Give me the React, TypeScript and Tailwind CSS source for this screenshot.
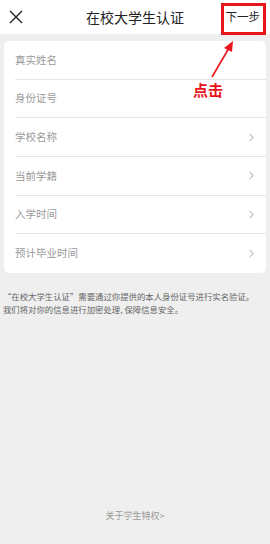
import { ChevronRight } from 'lucide-react';

const rows = [
  { label: '真实姓名', arrow: false },
  { label: '身份证号', arrow: false },
  { label: '学校名称', arrow: true },
  { label: '当前学籍', arrow: true },
  { label: '入学时间', arrow: true },
  { label: '预计毕业时间', arrow: true },
];

const font = { fontFamily: '"Noto Sans CJK SC", "Noto Sans", sans-serif' };

export default function App() {
  return (
    <div className="relative w-[270px] h-[544px] bg-[#efefef] flex flex-col overflow-hidden" style={font}>
      {/* header */}
      <div className="h-[34px] bg-white flex items-center px-[9px] relative shrink-0">
        <svg width="14" height="14" viewBox="0 0 14 14" className="text-[#222]">
          <path d="M1 1L13 13M13 1L1 13" stroke="currentColor" strokeWidth="1.4" fill="none" />
        </svg>
        <div className="absolute left-0 right-0 text-center text-[14px] text-[#222] leading-none pointer-events-none">
          在校大学生认证
        </div>
        <div className="ml-auto mr-px text-[11.5px] text-[#222] leading-none">下一步</div>
      </div>

      {/* form card */}
      <div className="mt-[7px] mx-[4px] bg-white rounded-[5px] pl-[11px]">
        {rows.map((r, i) => (
          <div
            key={r.label}
            className={`h-[38.67px] flex items-center pr-[8px] ${i < rows.length - 1 ? 'border-b border-[#e6e6e6]' : ''}`}
          >
            <span className="text-[10.5px] text-[#9a9a9a] leading-none">{r.label}</span>
            {r.arrow && <ChevronRight className="ml-auto text-[#707070]" size={13} strokeWidth={1.3} />}
          </div>
        ))}
      </div>

      <p className="mt-[17px] px-[3px] text-[8.4px] leading-[13px] text-[#666] whitespace-nowrap">
        “在校大学生认证”需要通过你提供的本人身份证号进行实名验证。
        <br />
        我们将对你的信息进行加密处理, 保障信息安全。
      </p>

      <div className="mt-auto mb-[22px] text-center text-[9px] text-[#999]">关于学生特权&gt;</div>

      {/* annotation overlay */}
      <div className="absolute left-[221px] top-[3px] w-[45px] h-[32px] border-[3px] border-[#e8161b]" />
      <svg className="absolute left-0 top-0" width="270" height="100">
        <line x1="212" y1="77" x2="229" y2="48" stroke="#e8161b" strokeWidth="1.6" />
        <polygon points="233,41 224,48 232,52" fill="#e8161b" />
      </svg>
      <div className="absolute left-[193px] top-[82px] text-[15px] font-bold text-[#e8161b] leading-none">点击</div>
    </div>
  );
}
